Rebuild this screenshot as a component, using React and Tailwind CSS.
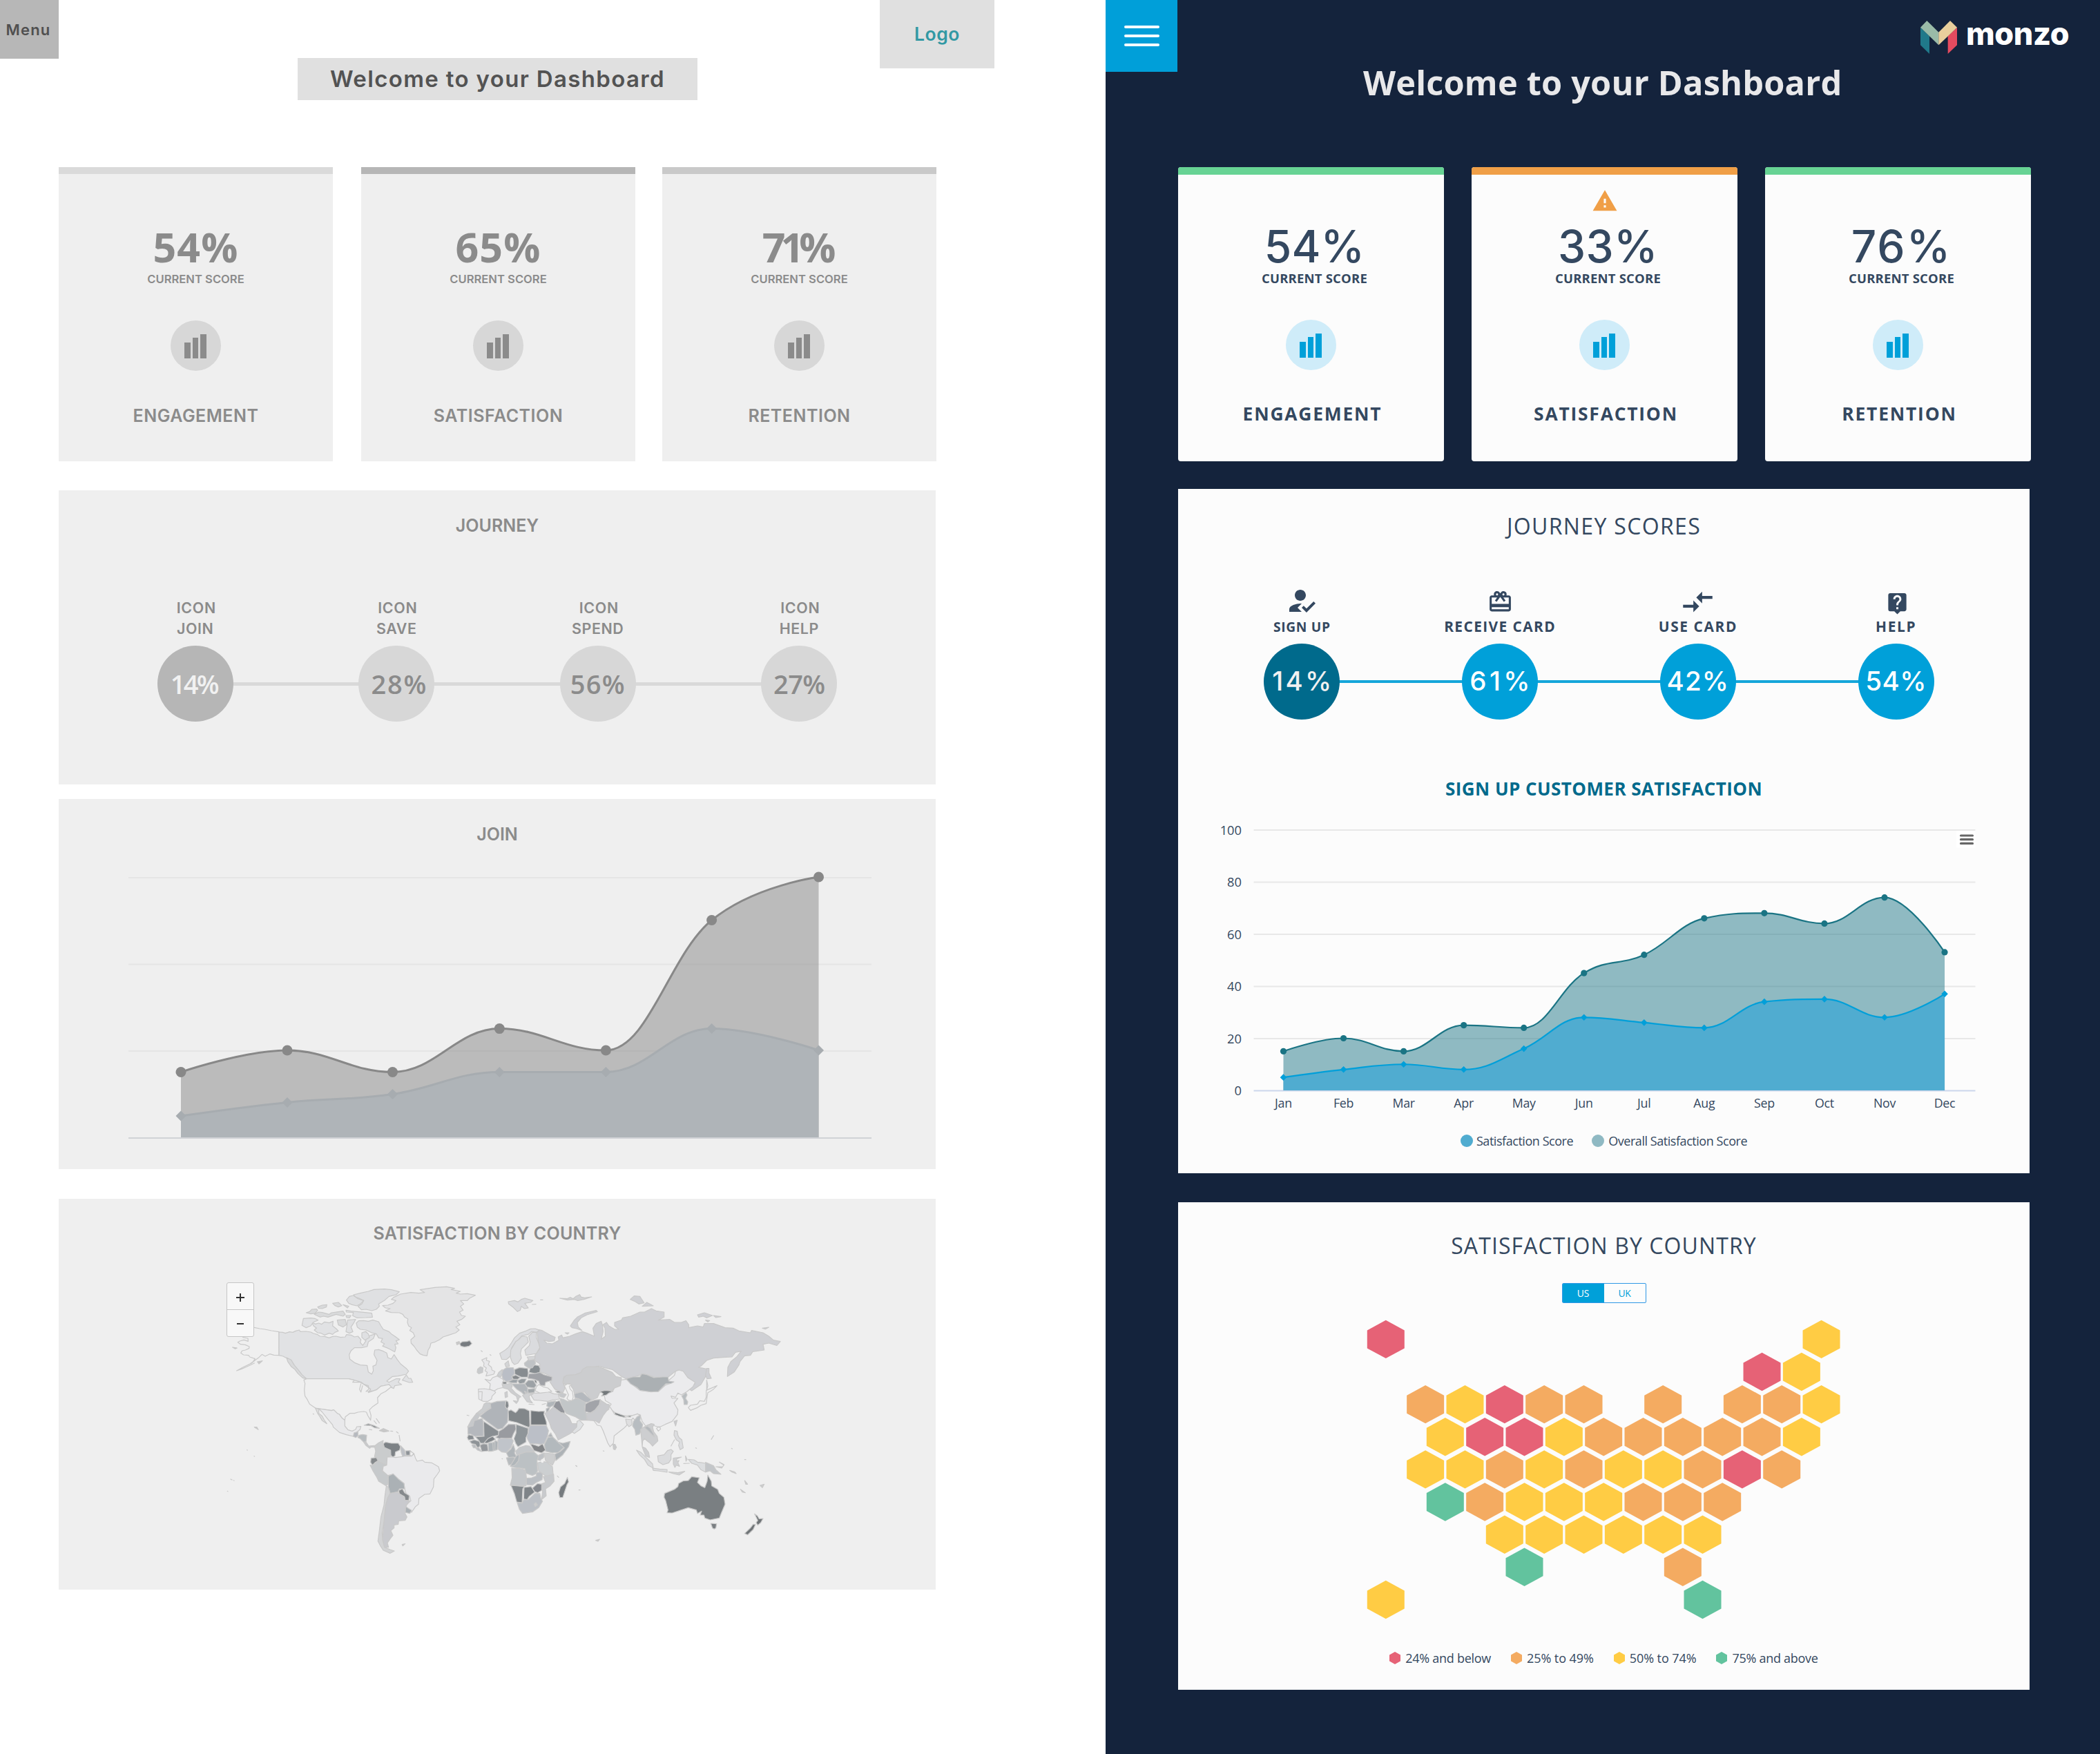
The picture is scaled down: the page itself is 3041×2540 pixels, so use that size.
import React from "react";
import { MdHowToReg, MdCardGiftcard, MdCompareArrows, MdLiveHelp, MdWarning } from "react-icons/md";

/* ---------- shared helpers ---------- */

// Smooth line through the points, control points never overshoot the data.
function splinePath(pts) {
  let d = `M${pts[0][0]},${pts[0][1]}`;
  let prev = pts[0];
  for (let i = 1; i < pts.length; i++) {
    const [x, y] = pts[i];
    const [lx, ly] = pts[i - 1];
    let left = [x, y];
    let right = [x, y];
    if (i < pts.length - 1) {
      const [nx, ny] = pts[i + 1];
      left = [(1.5 * x + lx) / 2.5, (1.5 * y + ly) / 2.5];
      right = [(1.5 * x + nx) / 2.5, (1.5 * y + ny) / 2.5];
      const c = ((right[1] - left[1]) * (right[0] - x)) / (right[0] - left[0]) + y - right[1];
      left[1] += c;
      right[1] += c;
      if (left[1] > ly && left[1] > y) {
        left[1] = Math.max(ly, y);
        right[1] = 2 * y - left[1];
      } else if (left[1] < ly && left[1] < y) {
        left[1] = Math.min(ly, y);
        right[1] = 2 * y - left[1];
      }
      if (right[1] > ny && right[1] > y) {
        right[1] = Math.max(ny, y);
        left[1] = 2 * y - right[1];
      } else if (right[1] < ny && right[1] < y) {
        right[1] = Math.min(ny, y);
        left[1] = 2 * y - right[1];
      }
    }
    d += ` C${prev[0]},${prev[1]} ${left[0]},${left[1]} ${x},${y}`;
    prev = right;
  }
  return d;
}

function Area({ pts, base, fill, stroke, width, marker, size }) {
  const line = splinePath(pts);
  return (
    <g>
      <path d={`${line} L${pts[pts.length - 1][0]},${base} L${pts[0][0]},${base} Z`} fill={fill} />
      <path d={line} fill="none" stroke={stroke} strokeWidth={width} />
      {pts.map(([x, y]) =>
        marker === "circle" ? (
          <circle key={x} cx={x} cy={y} r={size} fill={stroke} />
        ) : (
          <path key={x} d={`M${x},${y - size} l${size},${size} l${-size},${size} l${-size},${-size} Z`} fill={stroke} />
        )
      )}
    </g>
  );
}

function Bars({ className }) {
  return (
    <div className={`flex h-[73px] w-[73px] items-end justify-center gap-[3px] rounded-full pr-px pb-[18px] ${className}`}>
      <div className="h-[23px] w-[8.5px] bg-current" />
      <div className="h-[30px] w-[8.5px] bg-current" />
      <div className="h-[35px] w-[8.5px] bg-current" />
    </div>
  );
}

/* ---------- wireframe ---------- */

const wireCards = [
  { pct: "54%", label: "ENGAGEMENT", bar: "bg-[#dadada]", pctCls: "tracking-[1.2px]", ml: "" },
  { pct: "65%", label: "SATISFACTION", bar: "bg-[#b6b6b6]", pctCls: "tracking-[1.2px]", ml: "ml-[41px]" },
  { pct: "71%", label: "RETENTION", bar: "bg-[#c9c9c9]", pctCls: "tracking-[-7px] pr-2", ml: "ml-[39px]" },
];

const wireSteps = [
  { name: "JOIN", pct: "14%", circle: "bg-[#b6b6b6] text-[#f1f1f1]", text: "tracking-[-2.8px] pr-1" },
  { name: "SAVE", pct: "28%", circle: "bg-[#d7d7d7] text-[#8b8b8b]", text: "tracking-[1.8px] pl-2" },
  { name: "SPEND", pct: "56%", circle: "bg-[#d7d7d7] text-[#8b8b8b]", text: "tracking-[1.2px]" },
  { name: "HELP", pct: "27%", circle: "bg-[#d7d7d7] text-[#8b8b8b]", text: "tracking-[-0.6px]" },
];

const wireX = [262, 416, 568.5, 723.3, 877.4, 1030.6, 1185.5];
const wireUpper = [1552.5, 1521, 1552.5, 1489.6, 1521, 1332.5, 1270];
const wireLower = [1616, 1596.4, 1584.5, 1552.5, 1552.5, 1489.6, 1521];

const americas = [
  // Alaska
  ["none", "M205,307 L228,312 250,315 280,321 312,326 V428 L290,427 272,422 252,432 238,424 225,437 210,448 190,464 M128,495 L150,487 180,474 205,462 M128,495 L155,480 185,466 200,455 208,443 185,435 180,428 158,426 146,418 152,408 166,405 182,398 183,390 165,382 145,380 133,371 142,366 160,361 178,367 177,354 155,350"],
  // Canada
  ["#e1e2e4", "M312,327 L328,328 340,332 358,326 372,328 385,322 400,318 405,325 430,324 450,327 462,333 480,338 490,345 510,346 530,352 545,346 560,345 580,350 600,348 605,338 625,340 640,348 655,345 668,360 665,372 676,385 690,365 680,345 690,325 700,345 715,340 730,335 722,355 700,370 695,390 670,395 640,395 625,408 617,425 620,445 640,460 665,470 695,472 700,500 715,510 722,495 720,475 733,470 738,450 725,425 728,405 745,403 765,410 780,418 785,438 800,444 812,425 825,445 840,465 865,485 875,497 865,510 830,518 805,520 780,540 790,545 820,530 838,530 830,545 845,555 815,560 810,572 795,565 790,555 755,562 735,578 700,590 710,575 690,560 670,545 640,536 615,530 432,530 410,515 395,500 382,478 375,468 360,448 345,440 330,432 312,428 Z"],
  ["#e1e2e4", "M865,513 L875,528 885,528 893,545 878,546 860,540 848,536Z"],
  ["#d9dadb", "M345,438 L365,448 378,470 395,490 412,512 432,530 415,526 395,508 380,488 366,478 350,455Z"],
  // Arctic islands
  ["#e1e2e4", "M455,285 L470,292 485,288 497,293 510,283 530,287 547,280 545,300 560,312 570,322 555,328 545,337 530,332 510,340 495,332 480,330 465,318 475,310 462,300Z"],
  ["#e1e2e4", "M418,268 L450,266 468,268 482,275 460,285 450,300 430,308 412,298Z"],
  ["#d9dadb", "M430,243 L445,238 455,228 475,227 480,232 470,245 450,248Z M465,250 L485,240 500,242 530,250 540,243 575,238 590,236 600,250 590,258 560,250 525,262 505,258 490,262Z M480,218 L500,210 520,208 518,218 500,225 485,224Z M545,202 L570,198 585,212 570,218 555,212Z M590,208 L615,215 610,222Z M565,275 L600,272 605,295 590,305 570,296Z M603,255 L625,255 618,265 606,264Z"],
  ["#dfe0e2", "M610,275 L645,272 635,290 625,305 633,325 618,332 603,325 607,300Z"],
  ["#dfe0e2", "M636,165 L665,158 700,150 725,142 770,140 800,143 835,152 820,165 790,172 772,188 745,205 748,215 735,228 715,234 690,228 670,230 655,215 672,205 680,190 660,180 645,175Z"],
  ["#dfe0e2", "M605,188 L618,172 635,168 655,182 680,190 665,205 650,213 630,208 615,202Z M603,232 L625,236 650,238 715,245 718,262 690,264 650,265 632,256 635,242 605,240Z"],
  ["#dfe0e2", "M648,288 L658,278 680,277 700,280 720,275 745,282 755,300 765,315 790,325 800,335 815,345 835,360 820,365 830,378 815,380 820,395 815,413 795,402 780,395 762,388 770,378 755,370 762,355 745,352 735,335 715,330 690,318 665,315 652,305Z M672,330 L688,325 700,335 705,350 685,362 672,350Z"],
  // Greenland
  ["#e4e4e5", "M762,212 L785,210 808,202 820,190 800,185 812,175 840,162 885,155 920,158 945,155 925,143 990,133 1040,130 1075,137 1060,142 1100,150 1082,158 1100,162 1130,160 1165,167 1140,180 1130,190 1100,190 1115,205 1100,215 1112,232 1096,240 1105,255 1122,258 1105,272 1085,280 1098,295 1080,305 1095,318 1080,330 1050,340 1025,348 1010,360 990,370 972,375 968,392 960,405 955,430 940,428 925,422 910,405 900,390 886,375 885,360 902,345 895,330 880,320 888,308 875,300 870,285 872,270 858,262 850,250 835,243 800,242 775,235 795,225 775,222Z"],
  // United States
  ["#efefef", "M432,530 H615 L640,536 632,545 665,545 690,560 710,575 700,590 735,578 755,562 790,555 800,565 775,585 755,595 740,612 742,635 720,650 705,665 712,690 710,710 698,690 692,675 680,672 655,675 640,680 620,680 600,695 598,710 585,700 575,685 565,680 550,665 540,668 520,665 470,657 445,640 435,620 425,605 422,580 425,550 420,535Z"],
  ["none", "M668,552 L662,575 668,588 675,560 M685,555 L700,560 702,575 690,585 715,582"],
  // Mexico and Central America
  ["#e9e9eb", "M485,660 L520,665 540,668 550,665 565,680 575,685 585,700 598,710 598,735 612,752 630,757 645,750 650,738 668,737 664,750 650,762 640,765 635,780 605,773 575,763 548,740 545,730 520,700 500,675 Z"],
  ["#dedede", "M470,657 L485,662 485,680 500,692 508,708 520,725 500,712 490,695 480,680Z"],
  ["#b6b9bf", "M638,765 L655,760 655,778 645,785 635,780Z"],
  ["#b8bdc0", "M655,785 L660,775 675,772 693,775 690,803 680,805 665,790Z"],
  ["#c8cacc", "M680,805 L690,805 702,822 727,820 727,828 712,826 706,832 690,820Z"],
  ["#8a8e91", "M682,732 L700,725 725,733 748,745 728,743 710,733Z"],
  ["#c8c8c8", "M748,755 L765,746 790,757 768,761Z M704,750 L715,752Z M797,757 L806,758Z M725,712 L735,725Z M735,703 L748,722Z M822,760 L830,766Z M834,775 L838,800Z"],
  // South America
  ["#cacccd", "M727,822 L745,808 765,798 762,815 770,828 797,840 803,865 782,870 780,905 765,900 742,888 735,872 727,868 732,845Z"],
  ["#7d8286", "M765,812 L775,805 800,810 830,810 840,825 836,840 818,848 816,865 806,870 798,862 797,840 770,828Z"],
  ["#85898c", "M712,875 L735,872 742,886 728,895 718,905 710,893Z"],
  ["#bdc0c6", "M840,820 L858,840 862,865 850,870 843,850Z"],
  ["#8e9398", "M862,843 L882,842 880,862 864,862Z"],
  ["#efefef", "M882,843 L898,855 888,866 881,862Z"],
  ["#c6c9cb", "M708,905 L718,907 742,888 765,900 780,905 765,910 760,930 785,948 787,985 778,995 745,975 738,960 720,930Z"],
  ["#eaeaec", "M805,870 L818,872 848,868 862,865 888,866 898,855 905,875 912,888 935,883 945,892 975,895 1005,912 1010,930 1000,945 985,965 983,1000 968,1030 945,1032 920,1050 918,1075 905,1085 888,1110 868,1090 862,1080 885,1060 880,1040 865,1030 858,1008 855,985 830,965 808,945 785,950 762,930 765,910 780,905 782,870Z"],
  ["#abb1b5", "M787,952 L808,943 830,965 855,985 858,1008 835,1008 828,1022 795,1028 787,1000Z"],
  ["#85898c", "M832,1015 L848,1008 858,1025 878,1037 876,1058 860,1058 857,1042 835,1030Z"],
  ["#abb1b5", "M862,1085 L888,1102 880,1115 860,1110Z"],
  ["#c9cace", "M797,1028 L825,1022 857,1045 860,1058 880,1060 862,1085 860,1115 868,1130 860,1145 832,1147 830,1162 812,1165 812,1178 798,1190 807,1210 795,1225 783,1243 788,1262 770,1262 762,1230 768,1150 775,1080 785,1040Z"],
  ["#d3d4d5", "M778,997 L787,1000 795,1028 785,1045 775,1080 768,1150 760,1200 762,1230 770,1262 795,1272 813,1278 795,1288 765,1275 752,1255 742,1235 748,1190 755,1130 768,1080 772,1040Z"],
  ["#c8c8c8", "M847,1250 L860,1247 850,1256Z M205,740 L216,740 222,751Z M102,966 L108,969Z M110,393 L130,396 122,400Z M218,456 L240,452 225,465Z M115,971 L117,972Z M88,1018 L90,1019Z M173,839 L175,840Z M204,866 L206,867Z M460,682 L463,684Z"],
  ["#777c80", "M1097,377 L1108,369 1128,368 1140,364 1150,377 1138,388 1118,392 1102,388Z"],
  ["#c8c8c8", "M1082,372 L1095,368 1098,376 1085,382Z"],
];

const eurafrica = [
  ["#e8e8ea", "M98,208 L120,198 118,210 132,214 126,228 140,240 142,252 155,258 150,270 130,275 116,278 122,262 112,255 118,243 106,235 108,222Z"],
  ["#c8cacc", "M80,248 L92,238 103,242 102,262 85,268 78,262Z"],
  ["#dddee1", "M176,180 L200,165 215,152 228,132 240,112 262,92 290,82 310,73 330,72 348,80 335,88 315,84 300,97 272,103 258,120 246,128 228,155 224,190 205,206 185,205Z"],
  ["#dcdddf", "M224,165 L246,128 258,120 272,105 295,108 300,130 288,143 270,160 266,180 270,200 255,222 240,228 230,218 222,195Z"],
  ["#dadbde", "M302,105 L318,88 335,88 335,110 345,135 350,155 335,180 290,188 285,165 305,145 308,130Z"],
  ["#d4d5d7", "M198,225 L213,212 218,235 203,238Z"],
  ["#e9e9eb", "M83,335 L110,333 152,340 158,350 143,365 140,378 125,388 104,388 85,378Z"],
  ["none", "M86,346 L100,346 98,384"],
  ["#ebebed", "M112,292 L135,298 145,285 165,278 190,292 195,305 186,312 190,328 168,333 152,343 132,335 135,312Z"],
  ["#cdd0d3", "M172,262 L187,250 187,268 180,282 165,275Z"],
  ["#babec6", "M190,252 L205,242 235,242 242,265 230,280 232,295 205,302 190,292 185,272Z"],
  ["#85898c", "M188,303 L206,303 205,312 190,313Z"],
  ["#9ea4a9", "M208,304 L235,292 255,293 250,308 232,308Z"],
  ["#85898c", "M228,280 L245,274 265,284 255,292 235,292Z"],
  ["#878c90", "M240,250 L262,241 297,245 300,265 297,283 270,283 242,270Z"],
  ["#868c90", "M303,262 L308,245 325,230 345,232 352,245 350,263 330,267Z"],
  ["#bfc2c5", "M283,222 L300,208 325,205 332,222 318,242 303,244 285,232Z"],
  ["#d5d6d8", "M295,195 L330,192 328,206 303,210Z"],
  ["#969ca0", "M253,298 L270,290 292,290 283,308 262,312Z"],
  ["#a0a2a7", "M303,268 L330,267 350,262 368,272 403,282 402,297 375,305 372,320 352,318 345,300 325,292 298,288Z"],
  ["#9da2a6", "M285,312 L300,296 322,297 335,318 326,330 295,326Z"],
  ["#6f7478", "M325,293 L335,298 338,310 330,306Z"],
  ["#b2b6ba", "M228,312 L262,312 285,312 297,330 298,348 288,365 270,348 250,335 240,325Z"],
  ["#a3a8ab", "M297,335 L330,332 326,350 300,352Z"],
  ["#777c80", "M283,344 L293,348 288,352Z"],
  ["#cdced0", "M190,315 L228,310 230,325 225,330 245,352 268,368 260,372 255,388 248,365 225,350 212,335 192,330Z M198,350 L208,345 210,368 200,372Z M235,385 L255,388 248,397Z"],
  ["#cfd0d2", "M275,362 L290,354 322,352 303,365 308,382 318,395 295,390Z M303,400 L325,402Z M360,402 L375,398Z"],
  ["#e0e0e2", "M312,362 L325,352 345,352 385,345 410,355 430,357 436,378 405,382 385,388 350,384 325,382Z"],
  ["#85898c", "M418,343 L435,344 447,352 425,350Z"],
  ["#c6c8cb", "M430,356 L447,352 465,358 455,372 440,368Z"],
  ["#b1b6ba", "M383,392 L418,386 415,402 392,415 380,408Z"],
  ["#a9aeb3", "M378,420 L395,413 388,430 378,438Z"],
  ["#93959b", "M418,390 L435,385 445,405 458,425 458,440 440,436 408,412Z"],
  ["#cacbcf", "M372,440 L390,432 408,413 440,436 458,442 478,460 490,485 510,485 512,495 505,512 478,530 430,556 418,530 400,505 392,480Z"],
  ["#dfe1e3", "M512,475 L522,470 540,488 525,510 500,527 490,520 510,500Z"],
  ["#c2c6c8", "M438,375 L455,380 470,388 490,385 505,376 530,378 550,392 545,412 550,435 555,470 530,470 505,455 490,450 465,440 455,425 445,405Z"],
  ["#b4b8bd", "M500,355 L520,350 532,345 555,365 575,380 560,392 548,392 520,377 502,372Z"],
  ["#a2a4a9", "M548,400 L565,390 590,382 613,380 608,402 590,425 570,438 546,432Z"],
  ["#cacbce", "M556,470 L552,440 575,438 592,425 610,405 615,383 640,400 652,402 650,422 640,430 625,450 608,482 590,472Z"],
  ["#cccdcf", "M452,290 L465,275 505,272 530,262 535,250 555,238 600,237 625,245 665,262 680,280 705,285 700,320 675,330 660,345 610,350 600,372 575,382 545,348 520,348 500,352 495,335 478,310 455,315Z"],
  ["#74797c", "M612,345 L635,340 668,344 650,352 640,360 618,365 625,355Z"],
  ["#cbcdcf", "M75,440 L100,420 108,400 118,393 135,395 138,415 120,425 92,445Z"],
  ["#c6c8cb", "M36,500 L52,470 75,440 92,445 80,465 62,480 60,495Z"],
  ["#b5b8bd", "M38,500 L60,495 65,472 100,462 105,478 105,538 68,540 50,530 38,530Z"],
  ["#b0b4b9", "M90,452 L120,428 138,418 135,397 165,388 205,386 205,412 212,425 210,478 188,505 168,510 130,482Z"],
  ["#808589", "M203,385 L212,390 215,408 208,422 200,410Z"],
  ["#82878a", "M213,430 L225,425 245,437 252,430 260,418 285,420 305,430 307,503 250,480 215,472Z"],
  ["#74797d", "M311,428 L345,432 370,430 368,445 378,475 380,490 311,490Z"],
  ["#898e92", "M106,475 L172,518 170,535 145,540 125,550 108,570 92,570 85,558 70,542 108,540Z"],
  ["#999ba0", "M172,518 L190,508 215,487 243,488 247,508 235,530 228,548 180,552 158,545 170,535Z"],
  ["#8f9599", "M247,488 L300,505 298,535 290,545 290,565 255,585 245,570 238,550 247,525Z"],
  ["#bbbfc7", "M308,493 L378,493 388,515 383,540 370,570 360,575 330,572 308,572 298,555 293,540 300,525 303,505Z"],
  ["#b0b4b8", "M385,540 L398,525 408,545 428,562 415,562 400,545Z"],
  ["#b3b9bd", "M370,575 L385,545 405,542 425,562 445,580 455,588 430,610 405,612 375,605Z"],
  ["#adb2b6", "M430,565 L450,570 482,562 475,585 450,620 420,645 415,618 440,605 457,590Z"],
  ["#838588", "M308,572 L330,578 345,583 362,572 375,600 358,612 325,602Z"],
  ["#c5c8cb", "M245,605 L262,588 290,580 305,582 325,605 300,608 265,615 250,620Z"],
  ["#b0b5b9", "M205,612 L225,595 235,575 243,600 240,612 250,630 215,632Z"],
  ["#c0c4ca", "M168,555 L180,548 228,550 235,560 225,588 205,610 185,608 168,595Z"],
  ["#888d91", "M35,545 L40,533 60,537 65,552 40,556Z"],
  ["#8e9397", "M45,562 L65,555 88,562 92,582 80,590 70,575 55,572Z"],
  ["#b9bcc0", "M55,578 L68,575 75,590 62,590Z M72,592 L84,588 96,606 80,600Z"],
  ["#94979b", "M90,578 L105,572 122,574 126,603 98,606Z"],
  ["#adb3b7", "M126,570 L150,566 158,558 168,565 165,598 140,605 128,605Z"],
  ["#7f8488", "M108,568 L125,550 145,540 158,553 138,563 120,570Z"],
  ["none", "M146,568 L148,602 M155,563 V600"],
  ["#b7bbbe", "M205,633 L235,630 245,640 230,660 215,665Z"],
  ["#b0b6ba", "M248,625 L262,618 258,645 240,668 222,670 230,655Z"],
  ["#bcc1c4", "M262,617 L290,608 325,608 345,625 338,645 340,690 335,702 318,710 290,700 285,680 240,675 225,672 245,662 258,645Z"],
  ["#bfc2c6", "M345,622 L368,612 368,630 352,645 340,642Z"],
  ["#cdcecf", "M368,612 L400,615 415,618 415,645 405,665 375,645Z"],
  ["#cccfd1", "M340,655 L365,650 380,652 405,672 408,705 380,715 365,705 345,690Z"],
  ["#c5c8cb", "M228,678 L262,680 285,685 290,700 292,720 290,755 222,752 230,720Z"],
  ["#bbbfc4", "M292,722 L315,720 335,712 335,698 352,695 362,703 360,728 335,740 318,752 292,750Z"],
  ["#c8cacd", "M365,715 L410,705 412,735 395,755 375,768 378,798 358,815 362,780 355,748 375,740Z"],
  ["#85888e", "M318,765 L340,745 358,748 358,775 340,785 328,780Z"],
  ["#7f8488", "M282,762 L312,758 328,782 305,800 295,815 280,812Z"],
  ["#84898d", "M225,753 L282,758 276,768 273,828 250,825 240,790Z"],
  ["#bcc0c6", "M252,828 L273,830 280,815 300,815 330,787 350,788 355,812 362,822 345,850 320,868 275,875 262,858Z"],
  ["#cbcccd", "M325,835 L333,828 340,838 330,845Z"],
  ["#767b7f", "M470,718 L475,738 468,750 450,805 437,806 432,785 440,760 458,745Z"],
  ["#c8c8c8", "M34,448 L42,450Z M426,712 L432,718Z M506,667 L511,670Z M95,168 L100,172Z M134,185 L138,188Z M186,637 L188,638Z"],
];

const asiaPacific = [
  ["#cfd0d4", "M232,315 L255,320 290,340 312,350 308,365 285,368 262,362 275,375 300,378 328,362 325,348 340,340 345,352 375,345 400,335 430,325 450,332 482,345 476,310 490,290 512,280 518,300 520,325 512,358 530,345 528,310 520,295 535,285 545,300 570,315 588,315 570,300 570,285 600,275 605,265 640,258 680,240 700,240 730,225 750,235 785,240 785,262 760,275 810,272 830,285 860,285 880,278 892,295 892,308 930,300 955,305 960,290 1000,290 1050,308 1085,310 1110,322 1160,330 1165,320 1215,330 1240,345 1260,362 1290,368 1275,385 1240,375 1215,380 1220,405 1170,412 1160,428 1135,430 1115,455 1110,470 1090,500 1060,520 1062,480 1075,455 1100,435 1120,410 1095,415 1080,435 1040,437 1000,440 970,450 945,475 935,480 972,488 965,520 945,555 905,582 895,575 920,550 890,525 850,492 830,500 800,525 740,522 700,510 620,530 600,520 560,490 500,475 440,490 440,510 350,520 345,545 355,570 345,590 310,575 290,545 300,525 270,508 245,500 245,465 222,450 225,425 245,400 238,365Z"],
  ["#cfd0d4", "M970,485 L980,485 980,505 990,528 972,530 965,515Z"],
  ["#cfd0d4", "M378,300 L395,275 408,262 440,245 490,233 495,238 450,252 425,265 408,285 412,305 428,320 405,312 385,308Z"],
  ["#cfd0d4", "M638,185 L655,170 680,172 685,180 698,200 675,205 660,195Z M690,215 L710,198 738,213Z M930,252 L960,243 995,255 970,265 955,258 935,262Z M1000,255 L1032,260 1010,264Z M965,275 L983,277 975,283Z M1212,310 L1240,306 1225,314Z M355,330 L372,330 365,336Z"],
  ["#d2d3d5", "M332,180 L365,182 378,176 390,182 402,172 418,164 425,175 440,178 470,174 440,184 410,190 395,185 365,188Z"],
  ["#dadbde", "M108,195 L135,190 150,196 165,185 180,180 215,190 205,198 180,202 195,222 178,225 165,215 160,232 148,238 130,220 110,205Z M248,187 L258,187Z M212,207 L228,206Z"],
  ["#ebebed", "M525,600 L540,590 562,585 572,560 600,535 622,532 640,550 680,580 720,585 760,585 790,558 825,545 802,540 830,515 835,497 850,492 868,497 888,525 920,545 910,565 885,585 860,600 845,592 835,610 815,605 820,615 845,615 828,635 845,665 843,685 820,715 790,728 765,740 745,735 730,725 705,735 690,715 685,700 680,685 640,690 610,690 575,680 545,655 555,640 530,625Z"],
  ["none", "M752,745 L765,738 770,748 760,757Z"],
  ["#abb0b3", "M620,530 L650,522 680,522 688,508 710,512 740,525 780,522 802,522 805,540 828,543 815,550 792,552 760,585 728,587 680,580 668,568 640,552Z"],
  ["#ececed", "M540,650 L552,655 570,684 615,697 640,692 670,682 680,690 662,715 650,700 620,735 610,745 568,778 565,810 550,825 540,808 520,755 510,735 495,732 480,712 515,690 532,665Z"],
  ["#6c7174", "M570,676 L590,683 615,692 615,698 590,692 572,685Z M630,691 L640,690 640,696 630,696Z"],
  ["#c9cacc", "M563,815 L572,815 578,828 572,838 565,835Z"],
  ["#dfdfe0", "M618,705 L645,708 645,730 632,738 622,725Z"],
  ["#b8bdc1", "M652,715 L668,695 683,688 680,712 692,728 688,750 678,770 662,775 658,750 648,735Z"],
  ["#cdced0", "M682,750 L705,735 730,725 742,728 735,740 740,760 755,780 758,800 735,822 725,810 712,800 700,790 692,800 690,825 705,832 718,850 722,872 705,865 695,840 690,825 688,800 685,770Z"],
  ["#b5b9bd", "M700,742 L712,736 725,745 740,770 742,782 728,768 715,755Z"],
  ["#b8bdc0", "M862,605 L880,590 885,600 878,615 888,630 885,642 872,642 870,620Z"],
  ["#efefef", "M890,655 L900,645 930,640 940,625 960,628 968,610 968,580 1015,560 1000,575 985,585 975,590 970,620 968,638 945,645 930,655 900,667Z M970,580 L970,535 975,560Z"],
  ["#c9cacc", "M828,715 L842,710 835,735Z"],
  ["#dcdddf", "M830,755 L842,758 845,775 850,785 862,795 868,830 855,838 848,820 852,805 838,795 828,775Z M815,822 L830,795Z"],
  ["#dbdcde", "M665,840 L685,850 710,875 735,900 738,918 715,905 700,880 680,862Z M735,918 L765,922 798,924 798,936 760,930 738,928Z M757,865 L785,860 800,842 815,837 825,845 815,860 815,880 805,895 780,903 760,890Z"],
  ["#d0d1d3", "M805,935 L845,938 875,932 850,948 825,942Z M825,875 L860,870 840,878 838,888 850,885 845,895 852,910 838,905 832,915 825,900Z M878,865 L885,880 880,888Z M870,898 L895,897Z"],
  ["#dcdee0", "M890,880 L915,882 930,892 965,897 965,935 945,925 930,905 905,897Z"],
  ["#c3c6c9", "M965,893 L1000,908 1010,925 1032,945 1000,942 985,930 965,935Z"],
  ["#cccdce", "M1010,912 L1040,912 1045,902 1025,892 1045,905 1035,918Z M1070,928 L1092,935 1098,942 1080,935Z M1135,972 L1148,988 1140,988Z M1117,1010 L1138,1025 1125,1022Z M1202,993 L1220,988 1212,1003Z M990,793 L1000,777Z M488,1232 L505,1227 498,1236Z M922,830 L926,832Z M1078,832 L1081,834Z M1135,881 L1140,881Z M415,1013 L420,1013Z M403,908 L406,911Z M520,843 L524,844Z"],
  ["#7a7f82", "M787,1028 L830,1010 845,998 848,985 870,973 890,972 905,955 938,960 930,980 945,995 962,1003 972,975 975,948 990,975 992,995 1018,1010 1025,1028 1045,1045 1050,1075 1035,1110 1025,1135 985,1143 962,1135 958,1122 942,1122 948,1105 930,1115 925,1100 890,1090 860,1100 820,1113 798,1112 802,1100 792,1060 785,1045Z"],
  ["#7a7f82", "M988,1158 L1013,1160 1010,1178 1003,1183 995,1178Z"],
  ["#6f7477", "M1178,1117 L1190,1125 1198,1138 1215,1137 1205,1155 1192,1166 1185,1155 1192,1145Z M1182,1163 L1172,1185 1148,1208 1135,1202 1160,1178 1172,1162Z"],
];

function WorldMap() {
  const draw = (list) => list.map(([fill, d], i) => <path key={i} d={d} fill={fill} />);
  return (
    <svg viewBox="0 0 2550 1350" className="h-[450px] w-[850px]">
      <g stroke="#c9c9c9" strokeWidth="3.6" strokeLinejoin="round" strokeLinecap="round">
        {draw(americas)}
        <g transform="translate(1200 0)">{draw(asiaPacific)}</g>
        <g transform="translate(1095 240)">
          {draw(eurafrica)}
          <path d="M457,320 L470,312 490,315 478,322 482,335 492,345 495,370 490,385 475,383 468,375 475,360Z" fill="#f0f0f0" />
          <path d="M330,342 L335,325 345,315 365,325 385,330 402,345 385,348 350,352Z" fill="#f0f0f0" />
          <ellipse cx="361" cy="647" rx="6" ry="8" fill="#f0f0f0" stroke="none" />
        </g>
      </g>
    </svg>
  );
}

function Wireframe() {
  return (
    <div className="h-[2540px] w-[1601px] bg-white font-['Inter',sans-serif]">
      <header className="flex h-[242px] items-start">
        <div className="flex h-[85px] w-[85px] items-center justify-center bg-[#b7b7b7] pr-[3px] text-[22px] leading-none font-semibold tracking-[1.2px] text-[#505050]">Menu</div>
        <div className="mt-[84px] ml-[346px] flex h-[61px] w-[579px] items-center justify-center bg-[#e0e0e0] text-[33px] leading-none font-semibold tracking-[1.35px] whitespace-nowrap text-[#535353]">Welcome to your Dashboard</div>
        <div className="ml-[264px] flex h-[99px] w-[166px] items-center justify-center bg-[#e0e0e0] text-[26.5px] leading-none font-semibold tracking-[0.6px] text-[#3299a4]">Logo</div>
      </header>

      <div className="ml-[85px] flex w-[1271px]">
        {wireCards.map((c) => (
          <div key={c.label} className={`flex h-[426px] w-[397px] flex-col items-center bg-[#efefef] text-[#8b8b8b] ${c.ml}`}>
            <div className={`h-[10px] w-full ${c.bar}`} />
            <div className={`mt-[76px] font-['Open_Sans',sans-serif] text-[59px] leading-none font-bold ${c.pctCls}`}>{c.pct}</div>
            <div className="mt-[9px] text-[16.6px] leading-none font-semibold">CURRENT SCORE</div>
            <Bars className="mt-[51px] bg-[#d7d7d7]" />
            <div className="mt-[53px] text-[25px] leading-none font-semibold tracking-[0.5px]">{c.label}</div>
          </div>
        ))}
      </div>

      <section className="mt-[42px] ml-[85px] flex h-[426px] w-[1270px] flex-col items-center bg-[#efefef] pt-[39px] text-[#8b8b8b]">
        <h2 className="text-[25px] leading-none font-semibold">JOURNEY</h2>
        <div className="mt-[91px] flex w-full px-[52px]">
          {wireSteps.map((s, i) => (
            <div key={s.name} className="relative flex flex-1 flex-col items-center">
              <div className="pl-[3px] text-[21.4px] leading-[30px] font-semibold tracking-[0.7px]">ICON</div>
              <div className="text-[21.4px] leading-[30px] font-semibold tracking-[0.6px]">{s.name}</div>
              {i < 3 && <div className="absolute bottom-[52px] left-1/2 h-[5px] w-full bg-[#d9d9d9]" />}
              <div className={`relative mt-[10px] flex h-[110px] w-[110px] items-center justify-center rounded-full font-['Open_Sans',sans-serif] text-[38px] leading-none font-semibold ${s.circle}`}>
                <span className={s.text}>{s.pct}</span>
              </div>
            </div>
          ))}
        </div>
      </section>

      <section className="mt-[21px] ml-[85px] flex h-[536px] w-[1270px] flex-col items-center bg-[#efefef] pt-[39px] text-[#8b8b8b]">
        <h2 className="text-[25px] leading-none font-semibold">JOIN</h2>
        <svg viewBox="85 1240 1270 420" className="mt-[19px] h-[420px] w-[1270px]">
          {[1271, 1396.5, 1522].map((y) => (
            <line key={y} x1="186" x2="1262" y1={y} y2={y} stroke="#e5e5e5" strokeWidth="2" />
          ))}
          <g>
            <Area pts={wireX.map((x, i) => [x, wireUpper[i]])} base={1647} fill="rgba(136,136,136,0.5)" stroke="#888888" width="3" marker="circle" size="7.5" />
            <Area pts={wireX.map((x, i) => [x, wireLower[i]])} base={1647} fill="#afb4b8" stroke="#a7acb0" width="3" marker="diamond" size="7.5" />
          </g>
          <line x1="186" x2="1262" y1="1648" y2="1648" stroke="#d0d2d6" strokeWidth="2" />
        </svg>
      </section>

      <section className="mt-[43px] ml-[85px] h-[566px] w-[1270px] bg-[#efefef] pt-[38px] text-[#8b8b8b]">
        <h2 className="text-center text-[25px] leading-none font-semibold tracking-[0.25px]">SATISFACTION BY COUNTRY</h2>
        <div className="relative mt-[21px] ml-[215px] w-[850px]">
          <WorldMap />
          <div className="absolute top-[37px] left-[28px] h-[79px] w-[40px] rounded-[3px] border border-[#c6c6c6] bg-[#f8f8f8] text-[#333]">
            <div className="flex h-[39px] items-center justify-center border-b border-[#c6c6c6]">
              <svg viewBox="0 0 14 14" className="mt-1 h-[14px] w-[14px]"><path d="M7,1 V13 M1,7 H13" stroke="currentColor" strokeWidth="2" /></svg>
            </div>
            <div className="flex h-[38px] items-center justify-center">
              <svg viewBox="0 0 14 14" className="mt-0.5 h-[14px] w-[14px]"><path d="M2,7 H12" stroke="currentColor" strokeWidth="2" /></svg>
            </div>
          </div>
        </div>
      </section>
    </div>
  );
}

/* ---------- finished dashboard ---------- */

const scoreCards = [
  { pct: "54%", label: "ENGAGEMENT", bar: "bg-[#67d394]", text: "tracking-[0.2px]" },
  { pct: "33%", label: "SATISFACTION", bar: "bg-[#f09f47]", text: "tracking-[0.4px]", warn: true },
  { pct: "76%", label: "RETENTION", bar: "bg-[#67d394]", text: "tracking-[2px]" },
];

const steps = [
  { name: "SIGN UP", pct: "14%", Icon: MdHowToReg, icon: "h-[48px] w-[48px]", label: "text-[19.2px] tracking-[0.7px] pt-px", circle: "bg-[#006a8c] text-[#f1f1f1] tracking-[3.2px] pl-[3px]" },
  { name: "RECEIVE CARD", pct: "61%", Icon: MdCardGiftcard, icon: "mt-[7px] h-[37px] w-[37px]", label: "text-[20.9px] tracking-[1.4px]", circle: "bg-[#00a0d9] text-white tracking-[4.5px] pl-[4px]" },
  { name: "USE CARD", pct: "42%", Icon: MdCompareArrows, icon: "h-[51px] w-[51px]", label: "text-[20.9px] tracking-[1.6px]", circle: "bg-[#00a0d9] text-white tracking-[1.2px]" },
  { name: "HELP", pct: "54%", Icon: MdLiveHelp, icon: "mt-[10px] ml-[4px] h-[35px] w-[35px]", label: "text-[20.9px] tracking-[1.6px]", circle: "bg-[#00a0d9] text-white tracking-[0.5px]" },
];

const months = ["Jan", "Feb", "Mar", "Apr", "May", "Jun", "Jul", "Aug", "Sep", "Oct", "Nov", "Dec"];
const overall = [15, 20, 15, 25, 24, 45, 52, 66, 68, 64, 74, 53];
const signUp = [5, 8, 10, 8, 16, 28, 26, 24, 34, 35, 28, 37];
const toPoints = (values) => values.map((v, i) => [1858.5 + 87.05 * i, 1579 - v * 3.775]);

const hexColours = { r: "#e66276", o: "#f4ab61", y: "#ffcc44", g: "#62c39e" };
// Each row lists half-column index and score band.
const hexRows = [
  "0r 22y",
  "19r 21y",
  "2o 4y 6r 8o 10o 14o 18o 20o 22y",
  "3y 5r 7r 9y 11o 13o 15o 17o 19o 21y",
  "2y 4y 6o 8y 10o 12y 14y 16o 18r 20o",
  "3g 5o 7y 9y 11y 13o 15o 17o",
  "6y 8y 10y 12y 14y 16y",
  "7g 15o",
  "0y 16g",
];

const bands = [
  { text: "24% and below", colour: "text-[#e66276]", label: "tracking-[-0.28px]" },
  { text: "25% to 49%", colour: "text-[#f4ab61]", label: "tracking-[-0.08px]" },
  { text: "50% to 74%", colour: "text-[#ffcc44]", label: "tracking-[-0.08px]" },
  { text: "75% and above", colour: "text-[#62c39e]", label: "tracking-[-0.28px]" },
];

function Dashboard() {
  return (
    <div className="h-[2540px] w-[1440px] bg-[#14233c] font-['Open_Sans',sans-serif] text-[#344860]">
      <header className="flex h-[242px] items-start">
        <div className="flex h-[104px] w-[104px] flex-col items-center gap-[9px] bg-[#009fd9] pt-[37px]">
          <div className="h-[4px] w-[51px] rounded-full bg-white" />
          <div className="h-[4px] w-[51px] rounded-full bg-white" />
          <div className="h-[4px] w-[51px] rounded-full bg-white" />
        </div>
        <h1 className="mt-[95px] ml-[269px] w-[807px] text-[48.7px] leading-none font-bold tracking-[0.2px] whitespace-nowrap text-[#e8e8ea]">Welcome to your Dashboard</h1>
        <svg viewBox="243 90 159 144" className="mt-[30px] h-[48px] w-[53px]">
          <path d="M243,119 L282,157 V234 L243,196Z" fill="#20798a" />
          <path d="M402,119 L362,157 V234 L402,196Z" fill="#e54b5f" />
          <path d="M271,90 L322,140 V196 L243,119Z" fill="#9abba8" />
          <path d="M372,90 L402,119 L322,196 V140Z" fill="#e9cf9c" />
        </svg>
        <div className="mt-[26px] ml-[13px] font-['Inter',sans-serif] text-[45px] leading-none font-extrabold tracking-[-0.4px] text-white">monzo</div>
      </header>

      <div className="ml-[105px] flex gap-[40px]">
        {scoreCards.map((c) => (
          <div key={c.label} className="flex h-[426px] w-[385px] flex-col items-center overflow-hidden rounded-[4px] bg-[#fcfcfc]">
            <div className={`h-[11px] w-full shrink-0 ${c.bar}`} />
            <div className="flex h-[72px] shrink-0 items-start pt-[19px]">{c.warn && <MdWarning className="h-[38px] w-[38px] text-[#f09f47]" />}</div>
            <div className={`pl-[10px] font-['Inter',sans-serif] text-[64px] leading-none font-medium ${c.text}`}>{c.pct}</div>
            <div className="mt-[5px] pl-[10px] text-[18.5px] leading-none font-bold tracking-[0.2px]">CURRENT SCORE</div>
            <Bars className="mt-[50.5px] bg-[#cfecf9] text-[#00a0d9]" />
            <div className="mt-[50px] pl-[4px] text-[26.4px] leading-none font-bold tracking-[1.8px]">{c.label}</div>
          </div>
        ))}
      </div>

      <section className="mt-[40px] ml-[105px] flex h-[991px] w-[1233px] flex-col items-center bg-[#fcfcfc] pt-[38px]">
        <h2 className="text-[32px] leading-none font-medium tracking-[1.35px]">JOURNEY SCORES</h2>
        <div className="mt-[68px] flex w-full pr-[50px] pl-[36px]">
          {steps.map(({ name, pct, Icon, icon, label, circle }, i) => (
            <div key={name} className="relative flex flex-1 flex-col items-center">
              <div className="flex h-[51px] items-start justify-center">
                <Icon className={icon} />
              </div>
              <div className={`h-[21px] leading-none font-bold whitespace-nowrap ${label}`}>{name}</div>
              {i < 3 && <div className="absolute bottom-[53px] left-1/2 h-[4px] w-full bg-[#15a6da]" />}
              <div className={`relative mt-[14px] flex h-[110px] w-[110px] items-center justify-center rounded-full pb-[2px] font-['Inter',sans-serif] text-[38.5px] leading-none font-medium ${circle}`}>{pct}</div>
            </div>
          ))}
        </div>
        <h3 className="mt-[87px] text-[26px] leading-none font-bold tracking-[0.44px] text-[#006a8c]">SIGN UP CUSTOMER SATISFACTION</h3>
        <svg viewBox="1706 1180 1233 440" className="mt-[25px] h-[440px] w-[1233px]">
          {[0, 20, 40, 60, 80, 100].map((v) => (
            <g key={v}>
              <line x1="1815.5" x2="2860.5" y1={1579.5 - v * 3.775} y2={1579.5 - v * 3.775} stroke={v ? "#e8e8e8" : "#ccd6eb"} strokeWidth="2" />
              <text x="1798" y={1586 - v * 3.775} textAnchor="end" fontSize="18.3" fontWeight="500" fill="#344860">{v}</text>
            </g>
          ))}
          <Area pts={toPoints(overall)} base={1579} fill="rgba(26,116,132,0.48)" stroke="#1a7484" width="2.2" marker="circle" size="4.6" />
          <Area pts={toPoints(signUp)} base={1579} fill="#50acd0" stroke="#009fd9" width="2.2" marker="diamond" size="4.8" />
          {months.map((m, i) => (
            <text key={m} x={1858.5 + 87.05 * i} y="1604" textAnchor="middle" fontSize="17.8" fontWeight="500" letterSpacing="-0.25" fill="#344860">{m}</text>
          ))}
          <rect x="2833" y="1203" width="27.5" height="24.5" fill="#ffffff" />
          <path d="M2839.5,1210 H2856.5 M2839.5,1215.7 H2856.5 M2839.5,1221.4 H2856.5" stroke="#666666" strokeWidth="3.2" strokeLinecap="round" />
        </svg>
        <div className="mt-[22px] flex h-[20px] items-center text-[18px] leading-none font-medium tracking-[-0.45px]">
          <span className="mr-[5px] h-[18px] w-[18px] rounded-full bg-[#50acd0]" />
          Satisfaction Score
          <span className="mr-[6px] ml-[27px] h-[18px] w-[18px] rounded-full bg-[#8fb9c3]" />
          Overall Satisfaction Score
        </div>
      </section>

      <section className="mt-[42px] ml-[105px] flex h-[706px] w-[1233px] flex-col items-center bg-[#fcfcfc] pt-[47px]">
        <h2 className="text-[32px] leading-none font-medium tracking-[1.1px]">SATISFACTION BY COUNTRY</h2>
        <div className="mt-[38px] flex h-[29px] w-[122px] overflow-hidden rounded-[2px] border border-[#2f97e6] text-[13.9px] leading-none font-medium tracking-[-0.2px]">
          <div className="flex flex-1 items-center justify-center bg-[#00a0d9] text-white">US</div>
          <div className="flex flex-1 items-center justify-center text-[#00a0d9]">UK</div>
        </div>
        <svg viewBox="1706 1900 1233 450" className="mt-[14px] h-[450px] w-[1233px]">
          {hexRows.map((row, r) =>
            row.split(" ").map((cell) => {
              const x = 2006.8 + 28.67 * parseInt(cell, 10);
              const y = 1938.3 + 47.13 * r;
              return <path key={cell} d={`M${x},${y - 27.6} l27,14.7 v26 l-27,14.7 l-27,-14.7 v-26 Z`} fill={hexColours[cell.slice(-1)]} />;
            })
          )}
        </svg>
        <div className="mt-[40px] flex h-[20px] items-center gap-[29px] text-[18px] leading-none font-medium">
          {bands.map((b) => (
            <div key={b.text} className={`flex items-center gap-[7px] ${b.label}`}>
              <svg viewBox="0 0 16 18" className={`h-[18px] w-[16px] ${b.colour}`}><path d="M8,0 L16,4.5 V13.5 L8,18 L0,13.5 V4.5Z" fill="currentColor" /></svg>
              {b.text}
            </div>
          ))}
        </div>
      </section>
    </div>
  );
}

export default function App() {
  return (
    <div className="flex h-[2540px] w-[3041px] overflow-hidden bg-white">
      <Wireframe />
      <Dashboard />
    </div>
  );
}
